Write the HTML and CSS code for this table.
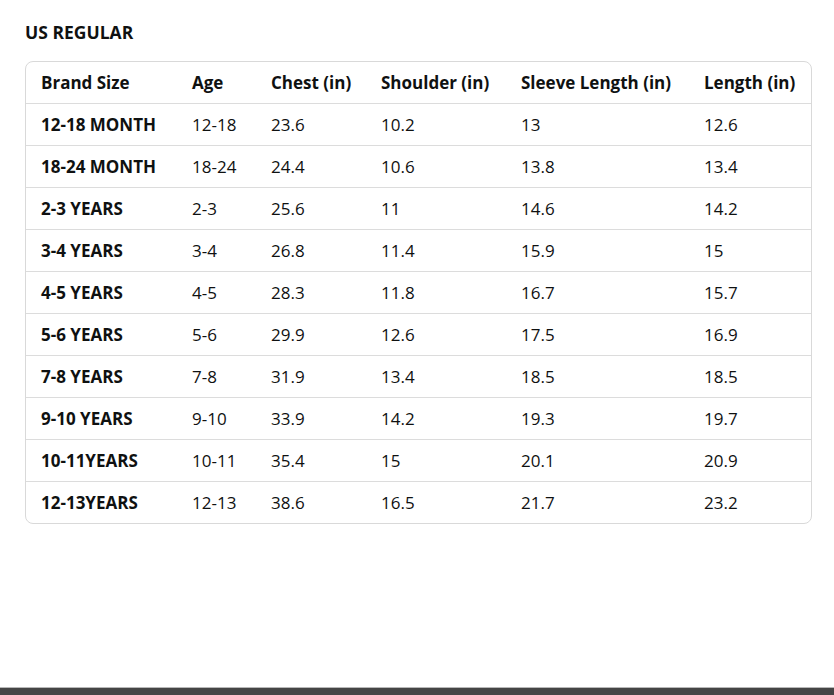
FILE: index.html
```html
<!DOCTYPE html>
<html>
<head>
<meta charset="utf-8">
<link rel="stylesheet" href="styles.css">
</head>
<body>
<div class="page">
  <h2 class="title">US REGULAR</h2>
  <div class="card">
    <table class="chart">
      <colgroup>
        <col class="c1"><col class="c2"><col class="c3"><col class="c4"><col class="c5"><col class="c6">
      </colgroup>
      <thead>
        <tr><th>Brand Size</th><th>Age</th><th>Chest (in)</th><th>Shoulder (in)</th><th>Sleeve Length (in)</th><th>Length (in)</th></tr>
      </thead>
      <tbody>
        <tr><th>12-18 MONTH</th><td>12-18</td><td>23.6</td><td>10.2</td><td>13</td><td>12.6</td></tr>
        <tr><th>18-24 MONTH</th><td>18-24</td><td>24.4</td><td>10.6</td><td>13.8</td><td>13.4</td></tr>
        <tr><th>2-3 YEARS</th><td>2-3</td><td>25.6</td><td>11</td><td>14.6</td><td>14.2</td></tr>
        <tr><th>3-4 YEARS</th><td>3-4</td><td>26.8</td><td>11.4</td><td>15.9</td><td>15</td></tr>
        <tr><th>4-5 YEARS</th><td>4-5</td><td>28.3</td><td>11.8</td><td>16.7</td><td>15.7</td></tr>
        <tr><th>5-6 YEARS</th><td>5-6</td><td>29.9</td><td>12.6</td><td>17.5</td><td>16.9</td></tr>
        <tr><th>7-8 YEARS</th><td>7-8</td><td>31.9</td><td>13.4</td><td>18.5</td><td>18.5</td></tr>
        <tr><th>9-10 YEARS</th><td>9-10</td><td>33.9</td><td>14.2</td><td>19.3</td><td>19.7</td></tr>
        <tr><th>10-11YEARS</th><td>10-11</td><td>35.4</td><td>15</td><td>20.1</td><td>20.9</td></tr>
        <tr><th>12-13YEARS</th><td>12-13</td><td>38.6</td><td>16.5</td><td>21.7</td><td>23.2</td></tr>
      </tbody>
    </table>
  </div>
</div>
<div class="bottom-bar"></div>
</body>
</html>
```

FILE: styles.css
```css
html, body {
  margin: 0;
  padding: 0;
  background: #ffffff;
  height: 100%;
}
body {
  font-family: "Open Sans", "Noto Sans", sans-serif;
  color: #0f1111;
  display: flex;
  flex-direction: column;
  height: 695px;
  overflow: hidden;
}
.page {
  flex: 1;
  padding: 21px 22px 0 25px;
}
.title {
  margin: 0 0 18px 0;
  font-size: 17.5px;
  font-weight: 700;
  line-height: 22px;
}
.card {
  border: 1px solid #d9d9d9;
  border-radius: 8px;
  overflow: hidden;
  width: 785px;
}
.chart {
  border-collapse: collapse;
  table-layout: fixed;
  width: 100%;
}
.c1 { width: 166px; }
.c2 { width: 79px; }
.c3 { width: 110px; }
.c4 { width: 140px; }
.c5 { width: 183px; }
.c6 { width: auto; }
.chart th, .chart td {
  height: 41px;
  padding: 0;
  text-align: left;
  font-size: 17px;
  white-space: nowrap;
  border-top: 1px solid #dcdcdc;
}
.chart th:first-child { padding-left: 15px; }
.chart thead th { border-top: none; height: 41px; font-weight: 700; }
.chart tbody th { font-weight: 700; }
.chart td { font-weight: 400; }
.bottom-bar {
  height: 7px;
  background: #454545;
  border-top: 1px solid #b8b8b8;
}
```
